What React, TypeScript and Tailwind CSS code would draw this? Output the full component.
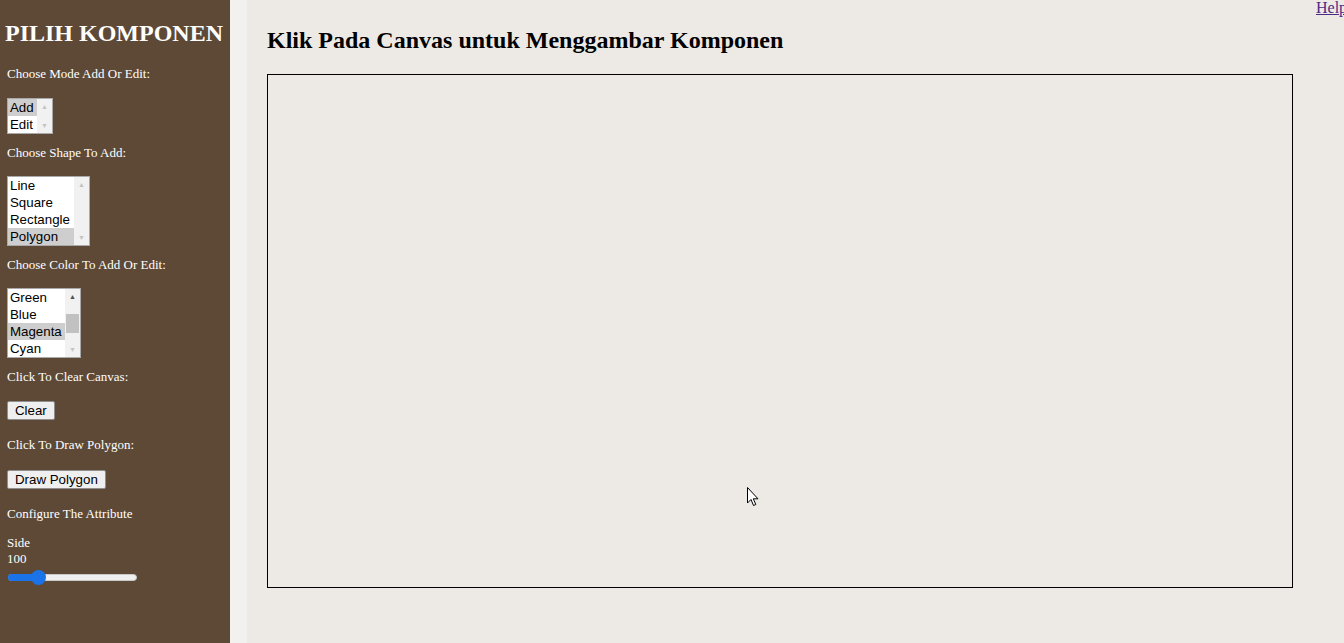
import type { ReactNode } from "react";

const serif = { fontFamily: '"Liberation Serif", "Times New Roman", serif' };
const sans = { fontFamily: '"Liberation Sans", Arial, sans-serif' };

function Label({ children, className = "" }: { children: ReactNode; className?: string }) {
  return (
    <p className={`whitespace-nowrap text-[13px] leading-[15px] text-white ${className}`}>
      {children}
    </p>
  );
}

function ListBox({
  options,
  selected,
  width,
  thumb,
}: {
  options: string[];
  selected: string;
  width: string;
  thumb?: boolean;
}) {
  return (
    <div className={`flex border border-[#a9a9a9] bg-white ${width}`} style={sans}>
      <div className="flex-1">
        {options.map((opt) => (
          <div
            key={opt}
            className={`h-[17px] pl-[2px] text-[13.3px] leading-[17px] text-black ${
              opt === selected ? "bg-[#cecece] text-[#111]" : ""
            }`}
          >
            {opt}
          </div>
        ))}
      </div>
      <div className="flex w-[15px] flex-col items-center justify-between bg-[#f1f1f1] py-[4px]">
        <span
          className={`text-[7px] leading-none ${thumb ? "text-[#505050]" : "text-[#c4c4c4]"}`}
        >
          ▲
        </span>
        {thumb && <div className="h-[19px] w-[13px] bg-[#c1c1c1]" />}
        <span className="text-[7px] leading-none text-[#c4c4c4]">▼</span>
      </div>
    </div>
  );
}

function Btn({ children, className = "" }: { children: ReactNode; className?: string }) {
  return (
    <div className={`flex ${className}`}>
      <button
        type="button"
        className="h-[19px] rounded-[2px] border border-[#8f8f8f] bg-[#efefef] px-[7px] text-[13.3px] leading-[16px] text-black"
        style={sans}
      >
        {children}
      </button>
    </div>
  );
}

export default function App() {
  return (
    <div className="relative flex h-[643px] w-[1344px] overflow-hidden bg-[#ede9e5]" style={serif}>
      <aside className="flex w-[230px] shrink-0 flex-col bg-[#5e4936] px-[7px] pt-[19px]">
        <h1 className="-ml-[2px] whitespace-nowrap text-[24px] font-bold leading-[28px] text-white">
          PILIH KOMPONEN
        </h1>

        <Label className="mt-[19px]">Choose Mode Add Or Edit:</Label>
        <div className="mt-[17px]">
          <ListBox options={["Add", "Edit"]} selected="Add" width="w-[46px]" />
        </div>

        <Label className="mt-[11px]">Choose Shape To Add:</Label>
        <div className="mt-[16px]">
          <ListBox
            options={["Line", "Square", "Rectangle", "Polygon"]}
            selected="Polygon"
            width="w-[83px]"
          />
        </div>

        <Label className="mt-[11px]">Choose Color To Add Or Edit:</Label>
        <div className="mt-[16px]">
          <ListBox
            options={["Green", "Blue", "Magenta", "Cyan"]}
            selected="Magenta"
            width="w-[74px]"
            thumb
          />
        </div>

        <Label className="mt-[11px]">Click To Clear Canvas:</Label>
        <Btn className="mt-[17px]">Clear</Btn>

        <Label className="mt-[17px]">Click To Draw Polygon:</Label>
        <Btn className="mt-[18px]">Draw Polygon</Btn>

        <Label className="mt-[17px]">Configure The Attribute</Label>

        <div className="mt-[14px] text-[13px] leading-[16px] text-white">
          <div>Side</div>
          <div>100</div>
        </div>
        <div className="relative mt-[3px] h-[15px] w-[130px]">
          <div className="absolute left-[1px] right-0 top-[4px] h-[7px] rounded-full border border-[#c9c9c9] bg-[#efefef]" />
          <div className="absolute left-[1px] top-[4px] h-[7px] w-[30px] rounded-full bg-[#1a73e8]" />
          <div className="absolute left-[24px] top-0 h-[15px] w-[15px] rounded-full bg-[#1a73e8]" />
        </div>
      </aside>

      <div className="w-[17px] shrink-0 bg-[#f3f1f0]" />

      <main className="flex-1 pl-[20px] pt-[27px]">
        <h2 className="text-[24px] font-bold leading-[27px] text-black">
          Klik Pada Canvas untuk Menggambar Komponen
        </h2>
        <div className="mt-[20px] h-[514px] w-[1026px] border border-black" />
      </main>

      <a
        href="#"
        className="absolute left-[1316px] top-[-4px] whitespace-nowrap text-[16px] text-[#4b2b86] underline"
      >
        Help
      </a>

      <svg
        className="absolute left-[747px] top-[487px]"
        width="13"
        height="20"
        viewBox="0 0 13 20"
      >
        <path
          d="M0.5 0.5 L0.5 16 L4 12.5 L6.5 18.5 L8.8 17.5 L6.3 11.8 L11 11.8 Z"
          fill="#fff"
          stroke="#000"
          strokeWidth="1"
        />
      </svg>
    </div>
  );
}
